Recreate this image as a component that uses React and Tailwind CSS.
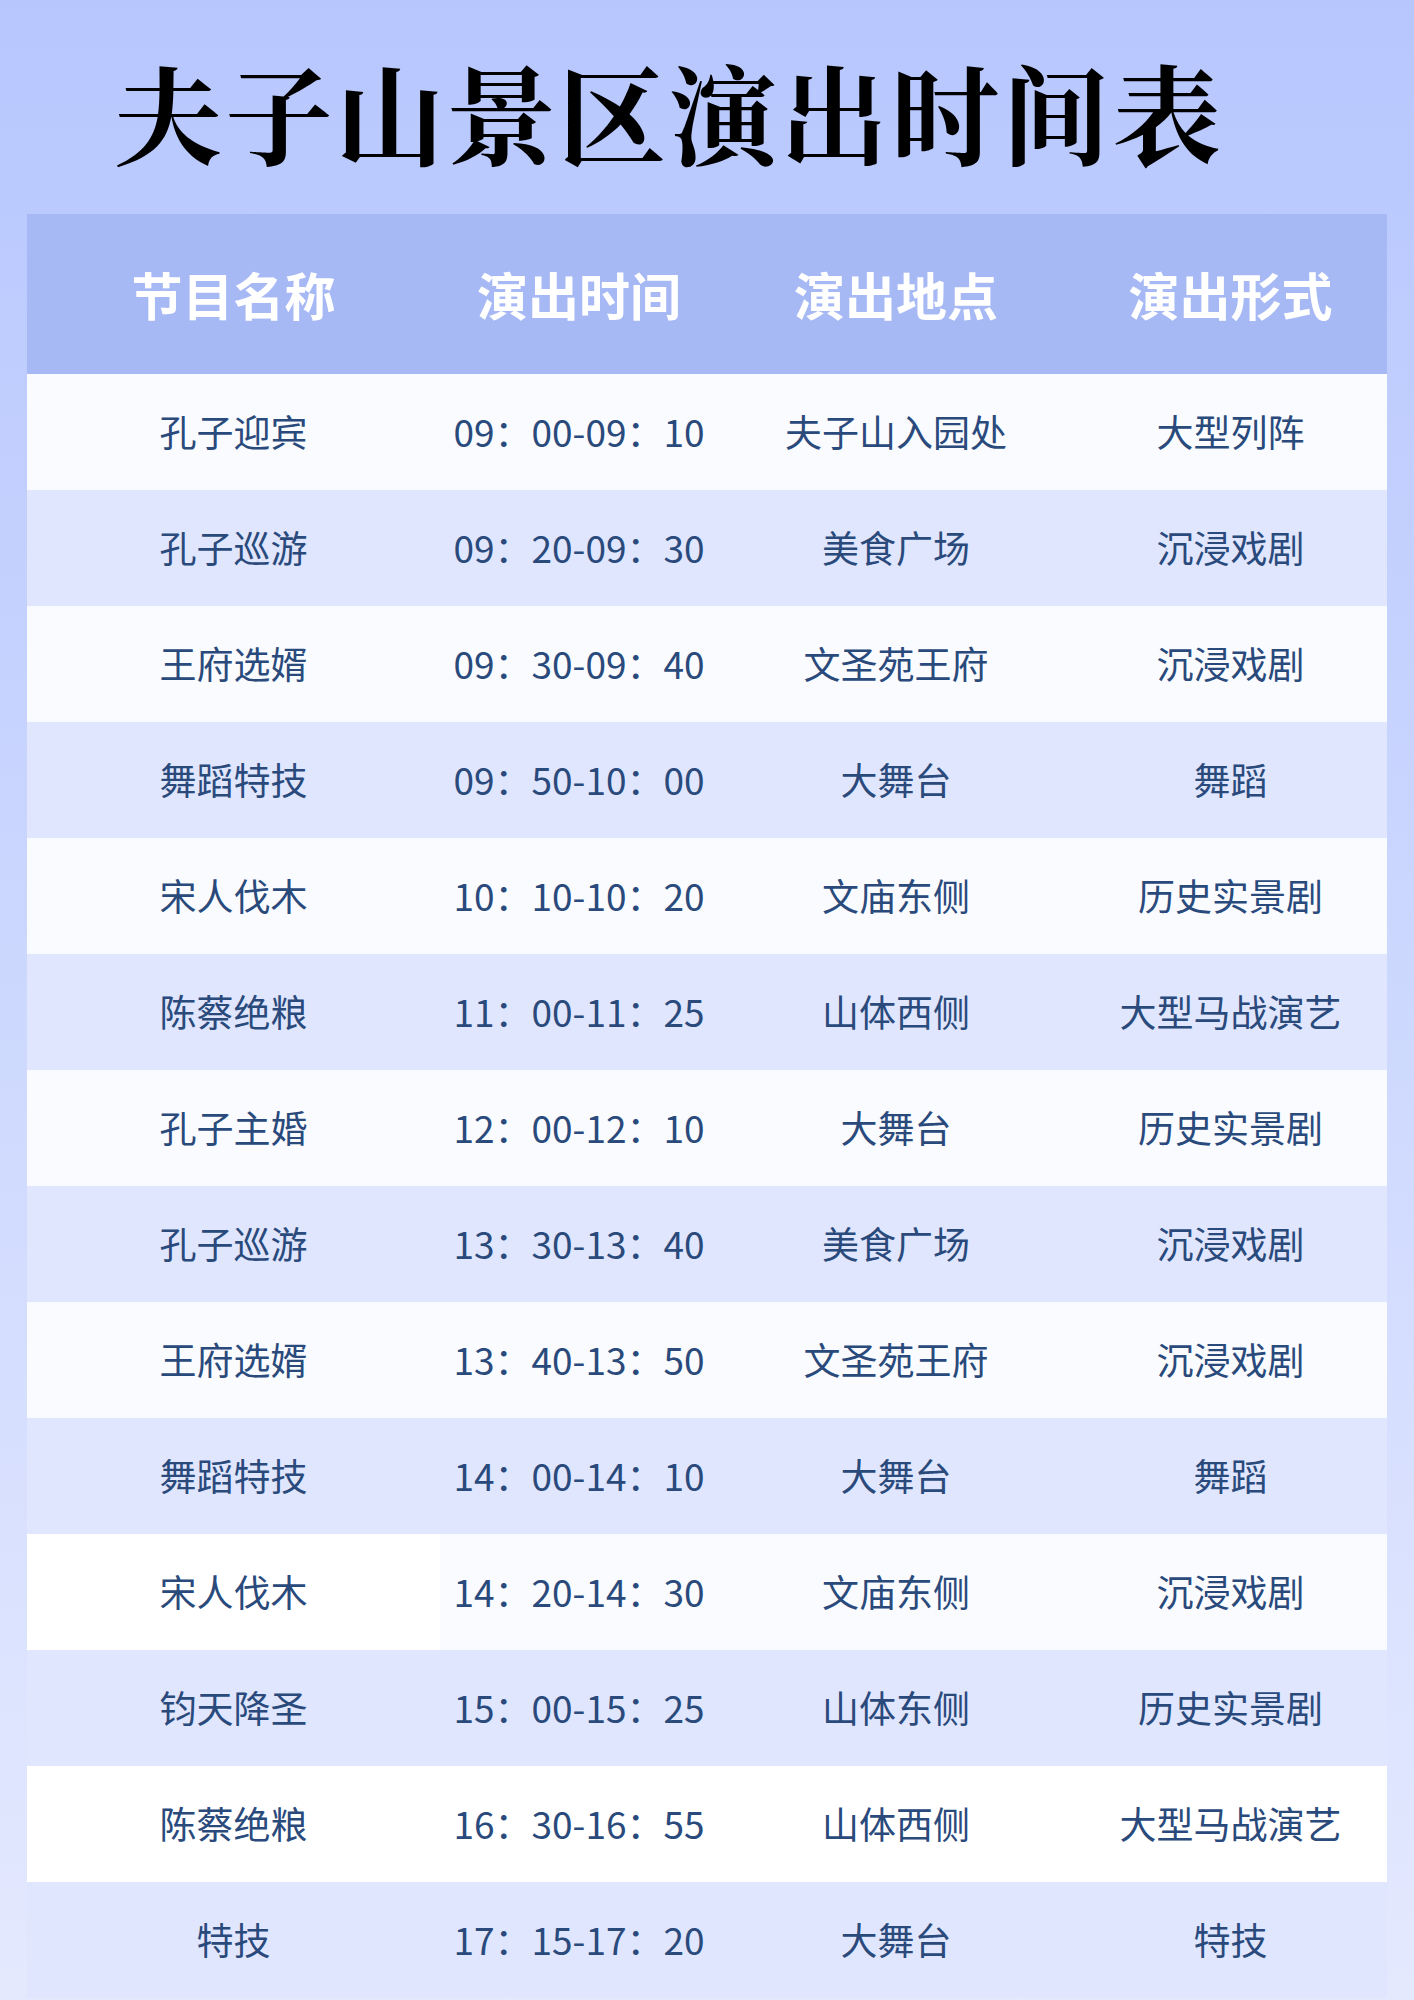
const rows = [
  ["孔子迎宾", "09：00-09：10", "夫子山入园处", "大型列阵"],
  ["孔子巡游", "09：20-09：30", "美食广场", "沉浸戏剧"],
  ["王府选婿", "09：30-09：40", "文圣苑王府", "沉浸戏剧"],
  ["舞蹈特技", "09：50-10：00", "大舞台", "舞蹈"],
  ["宋人伐木", "10：10-10：20", "文庙东侧", "历史实景剧"],
  ["陈蔡绝粮", "11：00-11：25", "山体西侧", "大型马战演艺"],
  ["孔子主婚", "12：00-12：10", "大舞台", "历史实景剧"],
  ["孔子巡游", "13：30-13：40", "美食广场", "沉浸戏剧"],
  ["王府选婿", "13：40-13：50", "文圣苑王府", "沉浸戏剧"],
  ["舞蹈特技", "14：00-14：10", "大舞台", "舞蹈"],
  ["宋人伐木", "14：20-14：30", "文庙东侧", "沉浸戏剧"],
  ["钧天降圣", "15：00-15：25", "山体东侧", "历史实景剧"],
  ["陈蔡绝粮", "16：30-16：55", "山体西侧", "大型马战演艺"],
  ["特技", "17：15-17：20", "大舞台", "特技"],
];

const headers = ["节目名称", "演出时间", "演出地点", "演出形式"];

export default function App() {
  return (
    <div
      className="min-h-[2000px] w-[1414px] overflow-hidden bg-gradient-to-b from-[#b7c7fe] to-[#e4e9fe]"
      style={{ fontFamily: '"Noto Sans CJK SC", "Noto Sans", sans-serif' }}
    >
      {/* Title */}
      <h1
        className="pl-[114px] pt-[57px] pb-[49px] text-[108px] leading-none font-bold tracking-[3px] text-black"
        style={{ fontFamily: '"Noto Serif CJK SC", "Noto Sans CJK SC", serif' }}
      >
        夫子山景区演出时间表
      </h1>

      {/* Table */}
      <div className="mx-[27px]">
        <div className="grid grid-cols-[413px_278px_356px_313px] h-[160px] bg-[#a7b9f5]">
          {headers.map((h) => (
            <div key={h} className="flex items-center justify-center text-[51px] font-bold text-white">
              {h}
            </div>
          ))}
        </div>

        {rows.map((r, i) => {
          const lav = i % 2 === 1;
          const rowBg = lav ? "bg-[#e0e6fe]" : i === 12 ? "bg-white" : "bg-[#f9fbff]";
          return (
            <div key={i} className={`grid grid-cols-[413px_278px_356px_313px] h-[116px] ${rowBg}`}>
              {r.map((c, j) => (
                <div
                  key={j}
                  className={`flex items-center justify-center text-[37px] text-[#2a4a7c] ${
                    i === 10 && j === 0 ? "bg-white" : ""
                  }`}
                >
                  {c}
                </div>
              ))}
            </div>
          );
        })}
      </div>
    </div>
  );
}
